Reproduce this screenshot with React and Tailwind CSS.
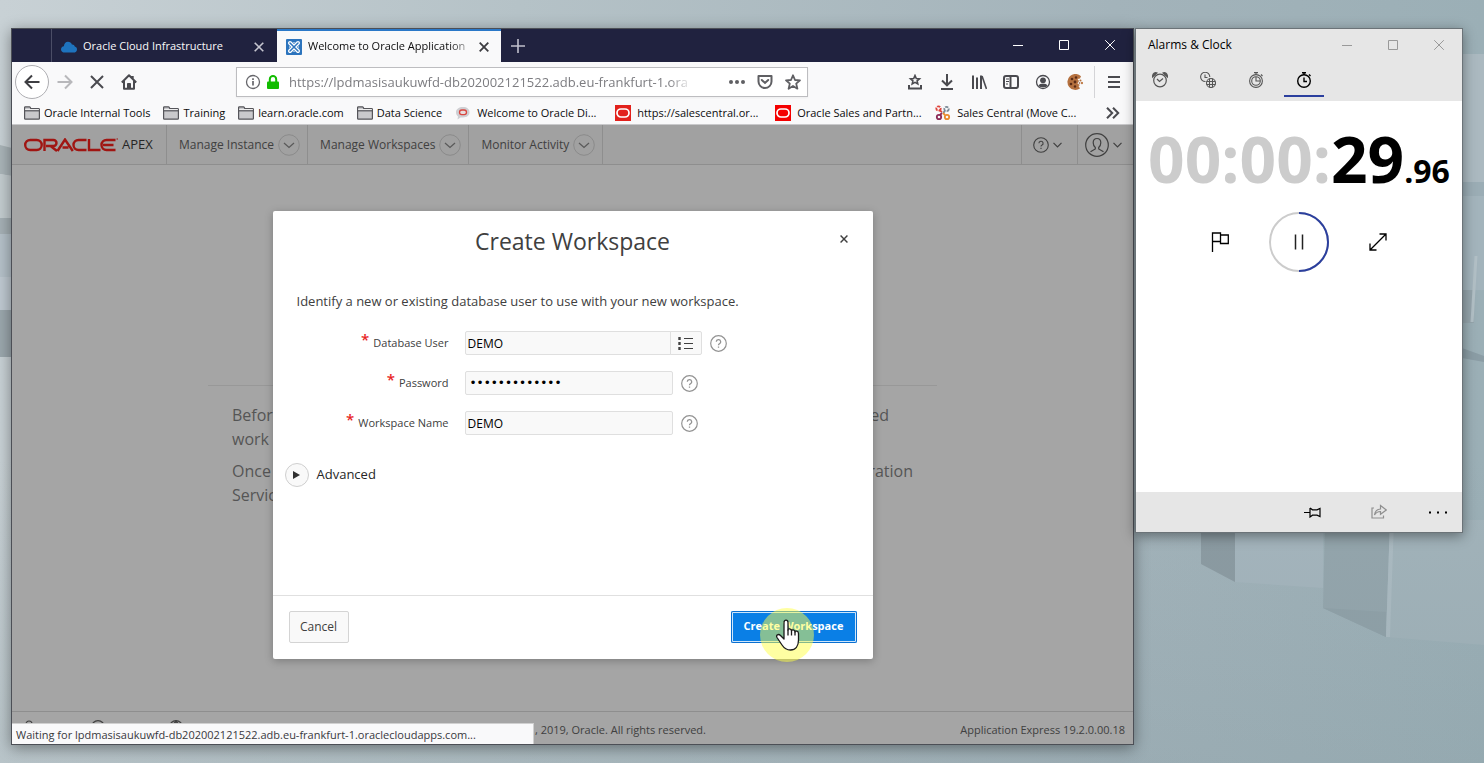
import React from "react";

function Svg({ w = 16, h = w, vb, children, className = "", sw = 2, fill = "none" }) {
  return (
    <svg
      width={w}
      height={h}
      viewBox={vb || `0 0 ${w} ${h}`}
      fill={fill}
      stroke="currentColor"
      strokeWidth={sw}
      className={`shrink-0 ${className}`}
      aria-hidden="true"
    >
      {children}
    </svg>
  );
}

function Wallpaper() {
  return (
    <svg
      className="absolute inset-0 -z-10 h-full w-full"
      viewBox="0 0 1484 763"
      preserveAspectRatio="none"
      aria-hidden="true"
    >
      <defs>
        <linearGradient id="sky" x1="0" y1="0" x2="1" y2="0">
          <stop offset="0" stopColor="#c8d1d5" />
          <stop offset="0.35" stopColor="#b5c2c7" />
          <stop offset="0.75" stopColor="#a3b3ba" />
          <stop offset="1" stopColor="#9bafb6" />
        </linearGradient>
        <linearGradient id="floor" x1="0" y1="0" x2="0" y2="1">
          <stop offset="0.6" stopColor="#7f959c" stopOpacity="0" />
          <stop offset="1" stopColor="#7f959c" stopOpacity="0.22" />
        </linearGradient>
      </defs>
      <rect width="1484" height="763" fill="url(#sky)" />
      <path d="M0 145L12 148V176L0 174Z" fill="#a9b4b8" />
      <path d="M0 174L12 176V218H0Z" fill="#c3cccf" />
      <rect y="218" width="12" height="16" fill="#a5b0b5" />
      <rect y="234" width="12" height="43" fill="#b5c1c9" />
      <rect y="277" width="12" height="33" fill="#bfc9d1" />
      <path d="M0 310H12V357H0Z" fill="#9ba7ad" />
      <rect x="1462" y="54" width="22" height="128" fill="#abb9c0" />
      <rect x="1462" y="182" width="22" height="14" fill="#9badb5" />
      <rect x="1462" y="196" width="22" height="94" fill="#a3b4bc" />
      <rect x="1462" y="290" width="12" height="33" fill="#95a5ac" />
      <path d="M1476 256L1472 322" stroke="#b2c0c6" strokeWidth="3" />
      <path d="M1462 348L1484 356V362L1462 358Z" fill="#8b9da5" />
      <path d="M1201 520V564L1235 582V520Z" fill="#8b9aa1" />
      <path d="M1235 520V582L1323 588V520Z" fill="#a5b5bd" />
      <path d="M1325 520L1323 608L1386 637L1392 520Z" fill="#94a5ac" />
      <path d="M1323 608L1386 637V612Z" fill="#8fa0a7" />
      <path d="M1390 520L1386 637L1484 645V520Z" fill="#a2b3ba" />
      <path d="M1392 520L1388 637" stroke="#acbbc2" strokeWidth="4" />
      <rect width="1484" height="763" fill="url(#floor)" />
    </svg>
  );
}

const Close = ({ s = 10, sw = 2 }) => (
  <Svg w={s} vb="0 0 10 10" sw={sw}>
    <path d="M.7 .7L9.3 9.3M9.3 .7L.7 9.3" />
  </Svg>
);

function WindowButtons({ className }) {
  const btn = "flex h-8 w-[46px] items-center justify-center";
  return (
    <div className={`flex ${className}`}>
      <button type="button" aria-label="Minimize" className={btn}>
        <Svg w={10} sw={1}><path d="M0 5.5H10" /></Svg>
      </button>
      <button type="button" aria-label="Maximize" className={btn}>
        <Svg w={10} sw={1}><path d="M.5 .5H9.5V9.5H.5Z" /></Svg>
      </button>
      <button type="button" aria-label="Close" className={btn}>
        <Svg w={10} sw={1}><path d="M.2 .2L9.8 9.8M9.8 .2L.2 9.8" /></Svg>
      </button>
    </div>
  );
}

function TabBar() {
  return (
    <div className="flex h-[33px] items-stretch bg-[#20223f] text-[11px]">
      <div className="w-10 shrink-0 border-r border-[#4b4d66]" />
      <div className="flex w-[225px] shrink-0 items-center pt-[2px] pr-[13px] pl-[9px] text-[#f9f9fa]">
        <Svg w={16} h={12} fill="#1e73be" sw={0}>
          <path d="M4 11.5C1.6 11.5 0 10.3 0 8.4C0 6.7 1.2 5.6 2.9 5.3C3 2.6 4.7 .8 7 .8C8.9 .8 10.3 1.8 10.9 3.5C12.3 3.3 13.5 4.200 13.8 5.600C15.200 6 16 7 16 8.400C16 10.300 14.600 11.500 12.500 11.500Z" />
        </Svg>
        <span className="ml-[6px] flex-1 truncate">Oracle Cloud Infrastructure</span>
        <button type="button" aria-label="Close tab" className="text-[#c6c6d0]"><Close sw={1.6} /></button>
      </div>
      <div className="flex w-[224px] shrink-0 items-center border-t-2 border-[#2a78c8] bg-[#f9f9fa] pr-3 pl-[9px] text-[#0c0c0d]">
        <Svg w={16} sw={0}>
          <rect width="16" height="16" rx="1" fill="#2c74bd" />
          <path d="M4 4L12 12M12 4L4 12" stroke="#fff" strokeWidth="4" strokeLinecap="round" />
          <path d="M4 4L12 12M12 4L4 12" stroke="#2c74bd" strokeWidth="1.500" strokeLinecap="round" />
          <path d="M3 8H4M12 8H13M8 3V4M8 12V13" stroke="#fff" strokeWidth="1" />
        </Svg>
        <span className="ml-[6px] flex-1 whitespace-nowrap [mask-image:linear-gradient(to_right,#000_85%,transparent)]">
          Welcome to Oracle Application
        </span>
        <button type="button" aria-label="Close tab" className="ml-1 text-[#3c3c40]"><Close sw={1.8} /></button>
      </div>
      <button type="button" aria-label="New tab" className="ml-[10px] text-[#c0c0cc]">
        <Svg w={14} sw={1.6}><path d="M7 0V14M0 7H14" /></Svg>
      </button>
      <div className="flex-1" />
      <WindowButtons className="text-white" />
    </div>
  );
}

function ToolButton({ label, children, className = "text-[#4a4a4f]" }) {
  return (
    <button type="button" aria-label={label} className={`flex h-8 w-8 shrink-0 items-center justify-center ${className}`}>
      {children}
    </button>
  );
}

function Toolbar() {
  return (
    <div className="flex h-10 items-center pr-[3px] pl-[3px]">
      <button type="button" aria-label="Back" className="flex size-[34px] shrink-0 items-center justify-center rounded-full border border-[#aeaeb2] bg-white text-[#3e3e42]">
        <Svg><path d="M15.500 8H1.500M8 1.500L1.500 8L8 14.500" /></Svg>
      </button>
      <ToolButton label="Forward" className="text-[#b8b8bb]">
        <Svg><path d="M.5 8H14.500M8 1.500L14.500 8L8 14.500" /></Svg>
      </ToolButton>
      <ToolButton label="Stop"><Close s={14} sw={1.4} /></ToolButton>
      <ToolButton label="Home">
        <Svg>
          <path d="M.8 8.500L8 1.300L15.200 8.500M3 7V14.800H13V7M11.700 2V4.500" strokeLinejoin="round" />
          <path d="M6.500 14.500V9.500H9.500V14.500Z" fill="currentColor" strokeWidth="1" />
        </Svg>
      </ToolButton>
      <div className="mx-[91px] flex h-[30px] min-w-0 flex-1 items-center border border-[#bdbdc0] bg-white pr-[6px] pl-2 shadow-xs">
        <Svg sw={1.3} className="text-[#66666b]">
          <circle cx="8" cy="8" r="6.500" />
          <path d="M8 7V11.500M8 4.200V5.900" strokeWidth="1.700" />
        </Svg>
        <Svg w={14} className="ml-[5px] text-[#12bc00]" sw={2}>
          <path d="M3.800 7V4.200A3.200 3.200 0 0 1 10.200 4.200V7" />
          <rect x="1" y="6.500" width="12" height="7.500" rx="1" fill="currentColor" stroke="none" />
        </Svg>
        <input
          aria-label="Address"
          readOnly
          value="https://lpdmasisaukuwfd-db202002121522.adb.eu-frankfurt-1.ora"
          className="ml-[9px] min-w-0 flex-1 bg-transparent pt-[2px] text-[13px] text-[#7c7c80] outline-none [mask-image:linear-gradient(to_right,#000_94%,transparent)]"
        />
        <button type="button" aria-label="Page actions" className="ml-9 text-[#5f5f63]">
          <Svg fill="currentColor" sw={0}>
            <circle cx="2" cy="8" r="2" /><circle cx="8" cy="8" r="2" /><circle cx="14" cy="8" r="2" />
          </Svg>
        </button>
        <button type="button" aria-label="Save to Pocket" className="ml-3 text-[#5f5f63]">
          <Svg>
            <path d="M1.500 2H14.500V7.500A6.500 6.500 0 0 1 1.500 7.500Z" strokeLinejoin="round" />
            <path d="M4.800 6L8 9L11.200 6" strokeLinecap="round" />
          </Svg>
        </button>
        <button type="button" aria-label="Bookmark this page" className="ml-3 text-[#5f5f63]">
          <Svg><path d="M8 1.300L10 6L15 6.300L11.200 9.600L12.400 14.700L8 11.900L3.600 14.700L4.800 9.600L1 6.300L6 6Z" strokeLinejoin="round" strokeWidth="1.800" /></Svg>
        </button>
      </div>
      <ToolButton label="Bookmarks menu">
        <Svg>
          <path d="M8 1.500L9.300 4.500L12.500 4.800L10.100 6.900L10.800 10L8 8.400L5.200 10L5.900 6.900L3.500 4.800L6.700 4.500Z" strokeWidth="1.600" />
          <path d="M2 11V14.500H14V11" />
        </Svg>
      </ToolButton>
      <ToolButton label="Downloads">
        <Svg><path d="M8 0V11M3 6.500L8 11.300L13 6.500M2 15H14" /></Svg>
      </ToolButton>
      <ToolButton label="Library">
        <Svg><path d="M2 1.500V15M6 3.500V15M10 1.500V15" /><path d="M11 2L15.500 15" strokeWidth="1.600" /></Svg>
      </ToolButton>
      <ToolButton label="Sidebars">
        <Svg>
          <rect x="1" y="2" width="14" height="12" rx="2" />
          <path d="M7.500 2V14" /><path d="M3 5H6M3 7.500H6M3 10H5" strokeWidth="1" />
        </Svg>
      </ToolButton>
      <ToolButton label="Account">
        <Svg sw={1.300}>
          <circle cx="8" cy="8" r="6.500" />
          <circle cx="8" cy="6.300" r="2.900" fill="currentColor" stroke="none" />
          <path d="M3.500 12C4 9.800 6 9.800 8 9.800S12 9.800 12.500 12C11 13.600 5 13.600 3.500 12Z" fill="currentColor" stroke="none" />
        </Svg>
      </ToolButton>
      <ToolButton label="Cookies">
        <Svg sw={0}>
          <path d="M14 2.200A8 8 0 1 0 13 14.500L11.500 12L13 11L10.500 9.500L12 7L10.500 5L13 4.500Z" fill="#b5713f" />
          <circle cx="5" cy="5" r="1.300" fill="#5a2c17" /><circle cx="9" cy="3.500" r="1.200" fill="#5a2c17" />
          <circle cx="4" cy="10" r="1.300" fill="#5a2c17" /><circle cx="8" cy="8" r="1.400" fill="#5a2c17" /><circle cx="8" cy="12.500" r="1.200" fill="#5a2c17" />
          <circle cx="13.500" cy="6.500" r="1" fill="#b5713f" /><circle cx="15" cy="9" r="1.200" fill="#c07f4c" /><circle cx="12.500" cy="9" r=".8" fill="#8e4f2a" />
        </Svg>
      </ToolButton>
      <div className="ml-[3px] h-8 w-px bg-[#d4d4d7]" />
      <ToolButton label="Open menu" className="ml-[3px] text-[#4a4a4f]">
        <Svg w={12}><path d="M0 1H12M0 6H12M0 11H12" /></Svg>
      </ToolButton>
    </div>
  );
}

const Folder = () => (
  <Svg h={14} sw={1.200} className="text-[#55555a]">
    <path d="M.6 12.400V1.600Q.6 .8 1.400 .8H5.500Q6 .8 6.300 1.400L6.800 2.600H14.600Q15.400 2.600 15.400 3.400V12.400Q15.400 13.200 14.600 13.200H1.400Q.6 13.200 .6 12.400Z" fill="#c9c9cc" />
    <path d="M.6 4.800H15.400" />
    <path d="M1.200 3.500H14.800" stroke="#eee" strokeWidth="1" />
  </Svg>
);

const OracleRed = ({ color = "#e2211c" }) => (
  <Svg sw={0}>
    <rect width="16" height="16" fill={color} />
    <rect x="2" y="4" width="12" height="8" rx="4" stroke="#fff" strokeWidth="1.700" />
  </Svg>
);

const Bubble = () => (
  <Svg sw={0}>
    <path d="M8 2C12 2 14.500 4 14.500 7.300S12 12.500 8 12.500L5.500 12.500L2.500 14.500L3 11.500C1.600 10.500 1 9 1 7.300C1 4 4 2 8 2Z" fill="#cfcfd3" />
    <rect x="4.500" y="5" width="7" height="4.600" rx="2.300" fill="#e8dcdc" stroke="#d9463f" strokeWidth="1.300" />
  </Svg>
);

const Knot = () => (
  <Svg sw={1.800}>
    <path d="M7 7L4 5" stroke="#e0453c" /><circle cx="3.500" cy="3.500" r="2.200" stroke="#e0453c" strokeDasharray="3 1" />
    <path d="M8 8L10 6" stroke="#7c8a96" /><circle cx="11.500" cy="4" r="2.200" stroke="#7c8a96" strokeDasharray="3 1" />
    <path d="M7 8L5 10" stroke="#8c2b57" /><circle cx="4" cy="12" r="2.200" stroke="#8c2b57" />
    <path d="M8 8L10 10" stroke="#e98a2e" /><circle cx="12" cy="12" r="2.200" stroke="#e98a2e" />
  </Svg>
);

const folders = ["Oracle Internal Tools", "Training", "learn.oracle.com", "Data Science"];
const sites = [
  [<Bubble />, "Welcome to Oracle Di..."],
  [<OracleRed />, "https://salescentral.or..."],
  [<OracleRed color="#f40000" />, "Oracle Sales and Partn..."],
  [<Knot />, "Sales Central (Move C..."],
];

function Bookmarks() {
  return (
    <div className="flex h-[22px] items-center pr-[13px] pl-3 text-[11px] whitespace-nowrap text-[#0c0c0d]">
      <div className="flex gap-[13px]">
        {folders.map((t) => (
          <a key={t} href="#" className="flex items-center gap-1"><Folder />{t}</a>
        ))}
      </div>
      <div className="ml-[13px] flex">
        {sites.map(([icon, t]) => (
          <a key={t} href="#" className="flex w-[160px] items-center gap-[6px]">{icon}{t}</a>
        ))}
      </div>
      <button type="button" aria-label="More bookmarks" className="ml-auto text-[#4a4a4f]">
        <Svg w={14} h={12}><path d="M1 .8L6.200 6L1 11.200M7 .8L12.200 6L7 11.200" /></Svg>
      </button>
    </div>
  );
}

const ChevronCircle = () => (
  <Svg w={22} sw={1}>
    <circle cx="11" cy="11" r="10.300" stroke="#8b8b8b" />
    <path d="M6 9L11 13.500L16 9" stroke="#5a5a5a" strokeWidth="1.300" />
  </Svg>
);

function ApexHeader() {
  return (
    <header className="flex h-10 items-stretch border-b border-[#8e8e8e] bg-[#a1a1a1] text-[12px] text-[#404040]">
      <a href="#" aria-label="Oracle APEX" className="flex w-[155px] items-center border-r border-[#8e8e8e] pl-3">
        <svg width="95" height="14" viewBox="0 0 95 14" fill="none" stroke="#a01512" strokeWidth="2.400" aria-hidden="true">
          <rect x="1.200" y="2" width="16.500" height="10" rx="5" />
          <path d="M20.500 13V2H29.500A2.900 2.900 0 0 1 29.500 8H22M26.500 8L33 13" />
          <path d="M33.500 13L41 1.500L48.800 13M38.500 9.500H44.500" />
          <path d="M62.500 2H54.500A5 5 0 0 0 54.500 12H62.500" />
          <path d="M65 1V12H76.500" />
          <path d="M91.500 2H82.500A5 5 0 0 0 82.500 12H91.500M79 7H89.500" />
          <path d="M92.500 1H94" strokeWidth="1.200" />
        </svg>
        <span className="ml-[3px] text-[13px] text-[#262626]">APEX</span>
      </a>
      {["Manage Instance", "Manage Workspaces", "Monitor Activity"].map((t) => (
        <button key={t} type="button" className="flex items-center gap-1 border-r border-[#8e8e8e] pr-[7px] pl-3">
          {t}
          <ChevronCircle />
        </button>
      ))}
      <div className="flex-1" />
      <button type="button" aria-label="Help" className="flex w-14 items-center gap-1 border-l border-[#8e8e8e] pl-[11px]">
        <Svg w={16} sw={1.100}>
          <circle cx="8" cy="8" r="7.300" />
          <path d="M5.900 6.300A2.100 2.100 0 1 1 8.700 8.300Q8 8.600 8 9.500M8 10.800V12" />
        </Svg>
        <Svg w={9} h={6} sw={1.200}><path d="M.5 .8L4.500 4.800L8.500 .8" /></Svg>
      </button>
      <button type="button" aria-label="User" className="flex w-14 items-center gap-1 border-l border-[#8e8e8e] pl-[7px]">
        <Svg w={24} sw={1.200}>
          <circle cx="12" cy="12" r="11.300" />
          <path d="M12 5.500C9.500 5.500 8.200 7.200 8.200 9.800C8.200 12 9.200 13.500 10.300 14.500V16L5.500 18.800M12 5.500C14.500 5.500 15.800 7.200 15.800 9.800C15.800 12 14.800 13.500 13.700 14.500V16L18.500 18.800" />
        </Svg>
        <Svg w={9} h={6} sw={1.200}><path d="M.5 .8L4.500 4.800L8.500 .8" /></Svg>
      </button>
    </header>
  );
}

const HelpIcon = ({ label }) => (
  <button type="button" aria-label={label} className="text-[#939393]">
    <Svg w={17} sw={1.200}>
      <circle cx="8.500" cy="8.500" r="7.800" />
      <path d="M6.300 6.800A2.200 2.200 0 1 1 9.300 8.900Q8.500 9.200 8.500 10.200M8.500 11.500V12.800" strokeWidth="1.300" />
    </Svg>
  </button>
);

function Field({ id, label, type = "text", value, list }) {
  return (
    <div className="flex h-10 items-center">
      <label htmlFor={id} className="flex w-[176px] shrink-0 justify-end text-[11px] leading-5 text-[#404040]">
        <span className="mr-1 text-[15px] leading-3 font-semibold text-[#e8251f]">*</span>
        {label}
      </label>
      <input
        id={id}
        type={type}
        defaultValue={value}
        className={`ml-4 h-6 border border-[#dfdfdf] bg-[#f9f9f9] text-[12px] text-black outline-none ${type === "password" ? "pl-1 font-['DejaVu_Sans',sans-serif]" : "pl-[2px]"} ${list ? "w-[206px] rounded-l-xs" : "w-[208px] rounded-xs"}`}
      />
      {list && (
        <button type="button" aria-label="Choose database user" className="-ml-px flex h-6 w-8 items-center justify-center rounded-r-xs border border-[#dfdfdf] bg-[#f9f9f9] text-[#404040]">
          <Svg w={16} h={14} sw={1}>
            <path d="M6 2.500H15M6 7.500H15M6 12.500H15" />
            <path d="M1.500 1V4M1.500 6V9M1.500 11V14" strokeWidth="2.400" />
          </Svg>
        </button>
      )}
      <div className="ml-2 flex"><HelpIcon label={`Help for ${label}`} /></div>
    </div>
  );
}

function Cursor() {
  return (
    <div className="pointer-events-none absolute top-[-3px] left-[29px] size-[54px] rounded-full bg-[#ffff46]/50">
      <svg width="26" height="32" viewBox="0 0 26 32" className="absolute top-[11px] left-[15px]" fill="#fff" stroke="#1a1a1a" strokeWidth="1.300" strokeLinejoin="round" aria-hidden="true">
        <path d="M9 17V3.500C9 .2 13 .2 13 3.500V11C13 9.300 16.500 9.300 16.500 12C16.500 10.300 20 10.500 20 13C20 11.500 23.500 11.800 23.500 14.500V21C23.500 27 20.500 31 15.500 31C11 31 9 29 7 26L2 18.500C.5 16 3.500 14.500 5.500 16.500L9 20Z" />
        <path d="M13 10.500V16.500M16.500 11.500V16.500M20 12.500V16.500" fill="none" />
      </svg>
    </div>
  );
}

function Dialog() {
  return (
    <section role="dialog" aria-labelledby="dlg-title" className="z-10 mt-[46px] flex h-[448px] w-[600px] flex-col rounded-xs bg-white shadow-[0_2px_8px_rgba(0,0,0,0.25)]">
      <div className="flex h-[60px] items-center justify-center pb-1 pl-[58px]">
        <h1 id="dlg-title" className="flex-1 pt-1 text-center text-[23px] text-[#404040]">Create Workspace</h1>
        <button type="button" aria-label="Close dialog" className="flex w-[58px] justify-center text-[#404040]">
          <Close s={8} sw={1.8} />
        </button>
      </div>
      <div className="flex-1">
        <p className="mt-5 mb-3 pl-6 text-[13px] leading-5 text-[#404040]">
          Identify a new or existing database user to use with your new workspace.
        </p>
        <Field id="db-user" label="Database User" value="DEMO" list />
        <Field id="db-pass" label="Password" type="password" value="Welcome123456" />
        <Field id="ws-name" label="Workspace Name" value="DEMO" />
        <button type="button" className="mt-5 ml-3 flex items-center gap-2 text-[13px] text-[#262626]">
          <span className="flex size-6 items-center justify-center rounded-full border border-[#cfcfcf] bg-[#f9f9f9]">
            <Svg w={7} h={8} fill="#303030" sw={0}><path d="M0 0L7 4L0 8Z" /></Svg>
          </span>
          Advanced
        </button>
      </div>
      <div className="flex h-16 items-center justify-between border-t border-[#e0e0e0] px-4 pb-[2px]">
        <button type="button" className="h-8 w-[60px] rounded-xs border border-[#d4d4d4] bg-[#f9f9f9] text-[12px] text-[#404040]">Cancel</button>
        <div className="relative">
          <button type="button" className="block h-8 w-[126px] rounded-xs bg-[#0a7fe6] text-[11px] font-bold text-white shadow-[inset_0_0_0_1px_#0a6fd0,inset_0_0_0_2px_#cfe6fb]">
            Create Workspace
          </button>
          <Cursor />
        </div>
      </div>
    </section>
  );
}

function ApexPage() {
  return (
    <main className="flex flex-1 flex-col border-t border-[#c9c9cb] bg-[#a5a5a5]">
      <ApexHeader />
      <div className="relative flex flex-1 justify-center">
        <div className="absolute inset-x-[196px] top-[220px] border-t border-[#989898] px-6 pt-[17px] text-[16px] leading-6 text-[#555]">
          <p className="flex justify-between"><span>Before</span><span className="mr-6">ed</span></p>
          <p>work</p>
          <p className="mt-2 flex justify-between"><span>Once</span><span>ration</span></p>
          <p>Services</p>
        </div>
        <Dialog />
      </div>
      <footer className="relative flex h-[33px] items-center border-t border-[#8e8e8e] pt-1 pr-2 text-[11px] text-[#404040]">
        <div className="flex w-[523px] items-center self-start pt-1 pl-2">
          <Svg w={14} sw={1.200} className="ml-1"><circle cx="5" cy="4" r="3" /></Svg>
          <Svg w={14} sw={1.200} className="ml-[53px]"><circle cx="7" cy="7" r="6.400" /></Svg>
          <Svg w={14} sw={1.200} className="ml-16"><circle cx="7" cy="7" r="6.400" /><path d="M7 .6V13.400M7 .6Q1 7 7 13.400M7 .6Q13 7 7 13.400" /></Svg>
        </div>
        <span>, 2019, Oracle. All rights reserved.</span>
        <span className="ml-auto">Application Express 19.2.0.00.18</span>
        <div role="status" className="absolute bottom-0 left-0 flex h-[21px] w-[522px] items-center border-t border-r border-[#d0d0d0] bg-[#f9f9fa] pt-[2px] pl-1 text-[11px] text-[#38383d]">
          Waiting for lpdmasisaukuwfd-db202002121522.adb.eu-frankfurt-1.oraclecloudapps.com...
        </div>
      </footer>
    </main>
  );
}

function Browser() {
  return (
    <div className="flex min-w-0 flex-1 flex-col border border-[#4c4f56] bg-[#f9f9fa] shadow-[0_3px_14px_rgba(0,0,0,0.4)]">
      <TabBar />
      <Toolbar />
      <Bookmarks />
      <ApexPage />
    </div>
  );
}

function ClockTab({ label, active, children }) {
  return (
    <button
      type="button"
      aria-label={label}
      className={`flex h-9 w-10 items-center justify-center border-b-2 pt-1 ${active ? "border-[#2b3f9e] text-black" : "border-transparent text-[#555]"}`}
    >
      {children}
    </button>
  );
}

function Clock() {
  return (
    <div className="flex h-[505px] w-[328px] shrink-0 flex-col border border-[#6b7378] bg-white shadow-[0_3px_12px_rgba(0,0,0,0.4)]">
      <div className="flex h-[72px] flex-col bg-[#e6e6e6]">
        <div className="flex h-8 items-center justify-between pl-3 text-[12px] text-black">
          Alarms &amp; Clock
          <WindowButtons className="text-[#999]" />
        </div>
        <div className="flex gap-2 pl-1">
          <ClockTab label="Alarm">
            <Svg sw={1.200}>
              <circle cx="8" cy="8.500" r="6.300" /><path d="M5 7L7.500 9.500L11 6.500" />
              <path d="M.5 5C.5 1.500 3 0 5 1ZM15.500 5C15.500 1.500 13 0 11 1Z" fill="currentColor" />
            </Svg>
          </ClockTab>
          <ClockTab label="World Clock">
            <Svg sw={1.100}>
              <path d="M5.500 9.500A4.600 4.600 0 1 1 9.800 5M5 2.500V5.500H7.500" />
              <circle cx="11" cy="11" r="4.500" /><path d="M9.500 6.700V15.300M12.500 6.700V15.300M6.700 9.500H15.300M6.700 12.500H15.300" />
            </Svg>
          </ClockTab>
          <ClockTab label="Timer">
            <Svg sw={1.100}>
              <circle cx="8" cy="9" r="6.400" /><circle cx="8" cy="9" r="4.300" />
              <path d="M8 5V9H12M6 .6H10M8 .6V2.500M13 2.500L14.500 4" />
            </Svg>
          </ClockTab>
          <ClockTab label="Stopwatch" active>
            <Svg sw={1.400}>
              <circle cx="8" cy="9" r="6.300" /><path d="M8 5.500V9.500H11M6 .7H10M8 1V3M13 2.500L14.500 4" />
            </Svg>
          </ClockTab>
        </div>
      </div>
      <div className="flex flex-1 flex-col items-center">
        <div className="mt-5 flex items-baseline text-[64px] leading-[76px] font-bold text-black">
          <span className="text-[#ccc]">00:00:</span>
          <span>29</span>
          <span className="text-[32px]">.96</span>
        </div>
        <div className="mt-[3px] flex w-[176px] items-center justify-between">
          <button type="button" aria-label="Lap">
            <Svg w={18} h={20} sw={1.300}>
              <path d="M1.500 20V1H9.500V9.500H1.500M9.500 3H17.300V11.500H9.500V9" />
            </Svg>
          </button>
          <button type="button" aria-label="Pause">
            <Svg w={60} sw={2}>
              <circle cx="30" cy="30" r="29" stroke="#ccc" />
              <path d="M30 1A29 29 0 0 1 30 59" stroke="#2b3f9e" />
              <path d="M26.500 22.500V37.500M33.500 22.500V37.500" stroke="#222" strokeWidth="1.500" />
            </Svg>
          </button>
          <button type="button" aria-label="Expand">
            <Svg w={18} sw={1.300}><path d="M1 17L17 1M10.500 1H17V7.500M1 10.500V17H7.500" /></Svg>
          </button>
        </div>
      </div>
      <div className="flex h-10 items-center justify-end gap-[50px] bg-[#e6e6e6] pr-[15px] text-black">
        <button type="button" aria-label="Pin">
          <Svg w={17} h={11} sw={1.200}><path d="M0 5.500H6M6 1V10L8.500 8.200H13L16 9.500V1.500L13 2.800H8.500L6 1" /></Svg>
        </button>
        <button type="button" aria-label="Share" className="text-[#8f8f8f]">
          <Svg w={16} sw={1.200}>
            <path d="M3 4H1V14H12.500V11.500" />
            <path d="M3.500 11C4 7.500 6 5.300 9.500 5V1.500L15.300 6L9.500 10.300V7.500C7 7.500 5 8.500 3.500 11Z" />
          </Svg>
        </button>
        <button type="button" aria-label="More" className="-ml-2">
          <Svg w={18} h={3} fill="currentColor" sw={0}><path d="M0 .5h2v2h-2zM8 .5h2v2h-2zM16 .5h2v2h-2z" /></Svg>
        </button>
      </div>
    </div>
  );
}

export default function App() {
  return (
    <div className="relative isolate flex min-h-screen items-stretch gap-px pt-7 pr-[21px] pb-[18px] pl-[11px] font-['Open_Sans','Noto_Sans',sans-serif]">
      <Wallpaper />
      <Browser />
      <Clock />
    </div>
  );
}
